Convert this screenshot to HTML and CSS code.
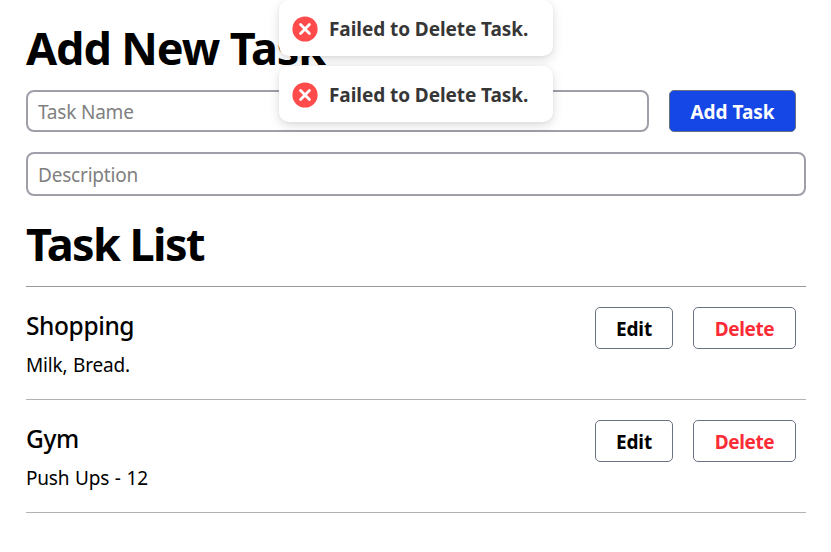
FILE: index.html
```html
<!DOCTYPE html>
<html lang="en">
<head>
<meta charset="utf-8">
<title>Task List</title>
<link rel="stylesheet" href="styles.css">
</head>
<body>
<main class="page">
  <h1 class="title">Add New Task</h1>
  <form class="form">
    <div class="form-row">
      <input class="field" type="text" placeholder="Task Name">
      <button class="btn btn-add" type="button">Add Task</button>
    </div>
    <input class="field field-description" type="text" placeholder="Description">
  </form>
  <h1 class="title title-list">Task List</h1>
  <ul class="tasks">
    <li class="task">
      <div class="task-text">
        <h2 class="task-name">Shopping</h2>
        <p class="task-description">Milk, Bread.</p>
      </div>
      <div class="actions">
        <button class="btn btn-edit" type="button">Edit</button>
        <button class="btn btn-delete" type="button">Delete</button>
      </div>
    </li>
    <li class="task">
      <div class="task-text">
        <h2 class="task-name">Gym</h2>
        <p class="task-description">Push Ups - 12</p>
      </div>
      <div class="actions">
        <button class="btn btn-edit" type="button">Edit</button>
        <button class="btn btn-delete" type="button">Delete</button>
      </div>
    </li>
  </ul>
</main>
<div class="toasts">
  <div class="toast">
    <svg class="toast-icon" viewBox="0 0 26 26"><circle cx="13" cy="13" r="12.6" fill="#ff4b4b"/><path d="M8.6 8.6l8.8 8.8M17.4 8.6l-8.8 8.8" stroke="#fff" stroke-width="2.8" stroke-linecap="round"/></svg>
    <span class="toast-text">Failed to Delete Task.</span>
  </div>
  <div class="toast">
    <svg class="toast-icon" viewBox="0 0 26 26"><circle cx="13" cy="13" r="12.6" fill="#ff4b4b"/><path d="M8.6 8.6l8.8 8.8M17.4 8.6l-8.8 8.8" stroke="#fff" stroke-width="2.8" stroke-linecap="round"/></svg>
    <span class="toast-text">Failed to Delete Task.</span>
  </div>
</div>
</body>
</html>
```
FILE: styles.css
```css
* { box-sizing: border-box; }
body {
  margin: 0;
  background: #fff;
  color: #000;
  font: 400 19px/30px "Noto Sans", "Open Sans", sans-serif;
  overflow: hidden;
}
.page { padding: 18px 25px 0 26px; }
.title {
  margin: 0;
  font-size: 45px;
  line-height: 60px;
  font-weight: 700;
  letter-spacing: -1.1px;
  white-space: nowrap;
}
.form { padding-top: 12px; }
.form-row {
  display: flex;
  gap: 20px;
  padding-right: 10px;
}
.field {
  display: block;
  flex: 1;
  min-width: 0;
  height: 42px;
  padding: 2px 10px 0;
  border: 2px solid #9f9fa9;
  border-radius: 8px;
  background: #fff;
  font: inherit;
  letter-spacing: -0.2px;
}
.field::placeholder { color: #808080; opacity: 1; }
.field-description {
  width: 100%;
  height: 44px;
  margin-top: 20px;
}
.btn {
  height: 42px;
  padding: 2px 0 0;
  border: 1px solid #6a7282;
  border-radius: 5px;
  background: #fff;
  color: #000;
  font: inherit;
  font-weight: 700;
  letter-spacing: -0.4px;
}
.btn-add { width: 127px; background: #1447e6; color: #fff; letter-spacing: 0; }
.btn-edit { width: 78px; letter-spacing: -0.1px; }
.btn-delete { width: 103px; color: #fb2c36; }
.title-list { margin-top: 18px; letter-spacing: -1.6px; }
.tasks {
  margin: 12px 0 0;
  padding: 0;
  border-top: 1px solid #999;
  list-style: none;
}
.task {
  display: flex;
  justify-content: space-between;
  height: 113px;
  padding: 20px 10px 0 0;
  border-bottom: 1px solid #b2b2b2;
}
.task-name {
  margin: 0;
  font-size: 24.5px;
  line-height: 37px;
  font-weight: 500;
  letter-spacing: -0.4px;
}
.task-description { margin: 6px 0 0; letter-spacing: -0.2px; word-spacing: 1px; }
.actions { display: flex; gap: 20px; }
.toasts {
  position: absolute;
  top: 0;
  left: 279px;
  display: grid;
  gap: 10px;
}
.toast {
  display: flex;
  align-items: center;
  width: 274px;
  height: 56px;
  padding: 1px 0 0 13px;
  border-radius: 10px;
  background: #fff;
  color: #363636;
  box-shadow: 0 4px 12px rgba(0, 0, 0, .12), 0 1px 4px rgba(0, 0, 0, .06);
}
.toast-icon { width: 26px; height: 26px; fill: none; }
.toast-text {
  margin: 1px 0 0 11px;
  font-weight: 700;
  letter-spacing: -0.07px;
  white-space: nowrap;
}
```
